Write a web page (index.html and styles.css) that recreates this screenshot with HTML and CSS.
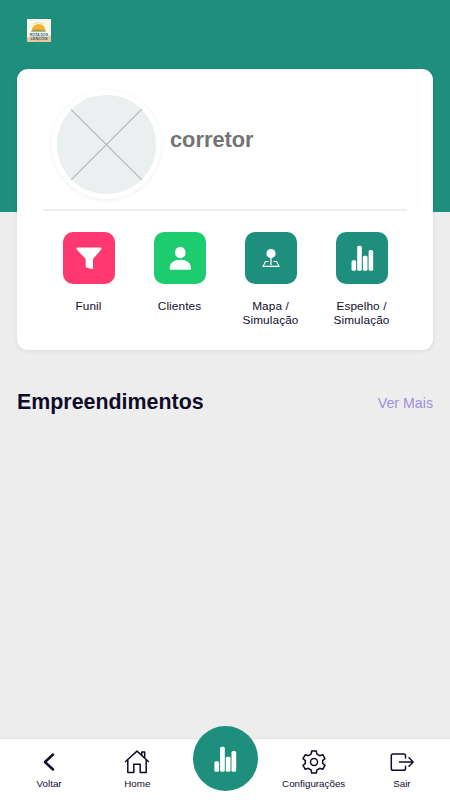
FILE: index.html
```html
<!DOCTYPE html>
<html lang="pt-BR">
<head>
<meta charset="utf-8">
<title>Painel do corretor</title>
<link rel="stylesheet" href="styles.css">
</head>
<body>
<div class="app">
  <header class="topbar">
    <svg class="logo" viewBox="0 0 24 23">
      <rect width="24" height="23" fill="#fbf8e8"/>
      <path d="M0 18.500Q7 16 13 17T24 16.500V23H0Z" fill="#ecc795"/>
      <path d="M6 5Q12 2 17 5" fill="none" stroke="#e2d6b4" stroke-width=".8"/>
      <path d="M4.800 11.500a6.700 6.500 0 0 1 13.600 0Z" fill="#f1b52c"/>
      <path d="M5 11Q10 9.500 18.500 11.500L19 12.800H4Z" fill="#9d9c62"/>
      <text class="logo-text" x="12" y="16.900" textLength="18.500" lengthAdjust="spacingAndGlyphs">ROTA DOS</text>
      <text class="logo-text" x="12" y="20.800" textLength="17" lengthAdjust="spacingAndGlyphs">LENÇÓIS</text>
    </svg>
  </header>
  <main class="content">
    <section class="card">
      <div class="profile">
        <div class="avatar">
          <svg viewBox="0 0 98 98"><path d="M14 14.500 84 84M84 14 14 84" stroke="#b4b8ba" stroke-width="1.300"/></svg>
        </div>
        <h1 class="name">corretor</h1>
      </div>
      <div class="actions">
        <a class="action">
          <span class="tile pink"><svg viewBox="0 0 52 52"><path d="M15 15.500H37Q39 15.500 38.300 17.400L30 27V36Q29.800 37.500 28.200 37L23.500 35.600Q22.700 35.200 22.700 34V27L13.700 17.400Q13 15.500 15 15.500Z" fill="#fff"/></svg></span>
          <span class="label">Funil</span>
        </a>
        <a class="action">
          <span class="tile green"><svg viewBox="0 0 52 52"><ellipse cx="26.300" cy="20.500" rx="5.300" ry="5.800" fill="#fff"/><path d="M15.600 36.500C15.600 31 20 27.700 26.300 27.700S37 31 37 36.500Q37 37.800 35.700 37.800H17Q15.600 37.800 15.600 36.500Z" fill="#fff"/></svg></span>
          <span class="label">Clientes</span>
        </a>
        <a class="action">
          <span class="tile"><svg viewBox="0 0 52 52"><circle cx="26" cy="21.500" r="4.600" fill="#fff"/><path d="M26 25V33" stroke="#fff" stroke-width="1.300"/><path d="M23.500 29.500H20.500L18 34.300H34L31.500 29.500H28.500" fill="none" stroke="#fff" stroke-width="1.150"/></svg></span>
          <span class="label">Mapa /<br>Simulação</span>
        </a>
        <a class="action">
          <span class="tile"><svg viewBox="0 0 52 52" fill="#fff"><rect x="15.500" y="28.300" width="4.600" height="10.500" rx="1.500"/><rect x="21.200" y="13.700" width="4.600" height="25.100" rx="1.500"/><rect x="26.900" y="23.700" width="4.600" height="15.100" rx="1.500"/><rect x="32.600" y="18" width="4.600" height="20.800" rx="1.500"/></svg></span>
          <span class="label">Espelho /<br>Simulação</span>
        </a>
      </div>
    </section>
    <div class="section-head">
      <h2>Empreendimentos</h2>
      <a class="more">Ver Mais</a>
    </div>
  </main>
  <nav class="tabs">
    <a class="tab">
      <svg viewBox="0 0 26 26" fill="none" stroke="#0f0c29" stroke-width="2.500"><path d="M17 5.500 9 13l8 7.500" stroke-linecap="round" stroke-linejoin="round"/></svg>
      <span>Voltar</span>
    </a>
    <a class="tab">
      <svg viewBox="0 0 26 26" fill="none" stroke="#0f0c29" stroke-width="1.500" stroke-linejoin="round" stroke-linecap="round"><path d="M1.600 12.500 13 2.100 24.400 12.500M3.800 10.700V23.600H9.800V15.300H16.200V23.600H22.200V10.700M17.800 6.200V3H20.700V8.800"/></svg>
      <span>Home</span>
    </a>
    <a class="tab">
      <span class="fab"><svg viewBox="0 0 65 65" fill="#fff"><rect x="21.400" y="35.300" width="4.700" height="10.500" rx="1.500"/><rect x="27.100" y="20.700" width="4.700" height="25.100" rx="1.500"/><rect x="32.800" y="30.700" width="4.700" height="15.100" rx="1.500"/><rect x="38.500" y="25" width="4.700" height="20.800" rx="1.500"/></svg></span>
    </a>
    <a class="tab">
      <svg viewBox="0 0 26 26" fill="none" stroke="#0f0c29" stroke-width="1.500" stroke-linejoin="round"><path d="M10.700 2H15.300L15.900 5.100Q17.400 5.700 18.700 6.700L21.700 5.700 24 9.700 21.600 11.700Q21.900 13 21.600 14.300L24 16.300 21.700 20.300 18.700 19.300Q17.400 20.300 15.900 20.900L15.300 24H10.700L10.100 20.900Q8.600 20.300 7.300 19.300L4.300 20.300 2 16.300 4.400 14.300Q4.100 13 4.400 11.700L2 9.700 4.300 5.700 7.300 6.700Q8.600 5.700 10.100 5.100Z"/><circle cx="13" cy="13" r="3.500"/></svg>
      <span>Configurações</span>
    </a>
    <a class="tab">
      <svg viewBox="0 0 26 26" fill="none" stroke="#0f0c29" stroke-width="1.500" stroke-linecap="round" stroke-linejoin="round"><path d="M16.500 9V6.700Q16.500 4.900 14.700 4.900H4.100Q2.300 4.900 2.300 6.700V19.500Q2.300 21.300 4.100 21.300H14.700Q16.500 21.300 16.500 19.500V17.200M10.500 13H24M20 8.800 24.200 13 20 17.200"/></svg>
      <span>Sair</span>
    </a>
  </nav>
</div>
</body>
</html>
```
FILE: styles.css
```css
* { box-sizing: border-box; }

body {
  margin: 0;
  font-family: "Liberation Sans", Arial, sans-serif;
  color: #110d2b;
  background: #ededed;
}

.app {
  height: 800px;
  display: flex;
  flex-direction: column;
  background: linear-gradient(#1e8f7d 212px, #ededed 212px);
}

.topbar {
  height: 69px;
  padding: 19px 27px 0;
}

.logo {
  display: block;
  width: 24px;
  height: 23px;
  overflow: visible;
}

.logo-text {
  font-size: 4.3px;
  font-weight: bold;
  fill: #1d6396;
  text-anchor: middle;
}

.content {
  flex: 1;
  padding: 0 17px;
}

.card {
  height: 281px;
  padding: 0 26px;
  border-radius: 11px;
  background: #fff;
  box-shadow: 0 1px 4px rgba(0, 0, 0, .08);
}

.profile {
  display: flex;
  height: 142px;
  padding: 21px 0 0 9px;
  gap: 9px;
  border-bottom: 2px solid #eee;
}

.avatar {
  width: 109px;
  height: 109px;
  flex: none;
  border: 5.500px solid #fff;
  border-radius: 50%;
  background: #ebeff0;
  box-shadow: 0 1px 4px rgba(0, 0, 0, .07);
}

.avatar svg {
  display: block;
}

.name {
  margin: 37px 0 0;
  font-size: 21.8px;
  line-height: 25px;
  color: #747474;
}

.actions {
  display: grid;
  grid-template-columns: repeat(4, 1fr);
  padding-top: 21px;
}

.action {
  display: flex;
  flex-direction: column;
  align-items: center;
  gap: 15px;
}

.tile {
  width: 52px;
  height: 52px;
  border-radius: 10px;
  background: #1e8f7d;
}

.tile svg,
.fab svg {
  display: block;
}

.pink { background: #ff396f; }
.green { background: #1ecc70; }

.label {
  font-size: 11.8px;
  line-height: 14px;
  letter-spacing: .1px;
  text-align: center;
}

.section-head {
  display: flex;
  justify-content: space-between;
  align-items: center;
  margin-top: 39px;
  height: 26px;
}

h2 {
  margin: 0;
  font-size: 21.4px;
  line-height: 26px;
  color: #0f0c29;
}

.more {
  padding-top: 2px;
  font-size: 14.2px;
  color: #a08fe0;
}

.tabs {
  display: grid;
  grid-template-columns: repeat(5, 1fr);
  height: 62px;
  padding: 0 4px 0 5px;
  border-top: 1px solid #dfe0e8;
  background: #fff;
}

.tab {
  display: flex;
  flex-direction: column;
  align-items: center;
  gap: 3px;
  padding-top: 10px;
  font-size: 9.8px;
  line-height: 12px;
}

.tab > svg {
  width: 26px;
  height: 26px;
}

.fab {
  width: 65px;
  height: 65px;
  flex: none;
  margin-top: -23px;
  border-radius: 50%;
  background: #1e8f7d;
}
```
